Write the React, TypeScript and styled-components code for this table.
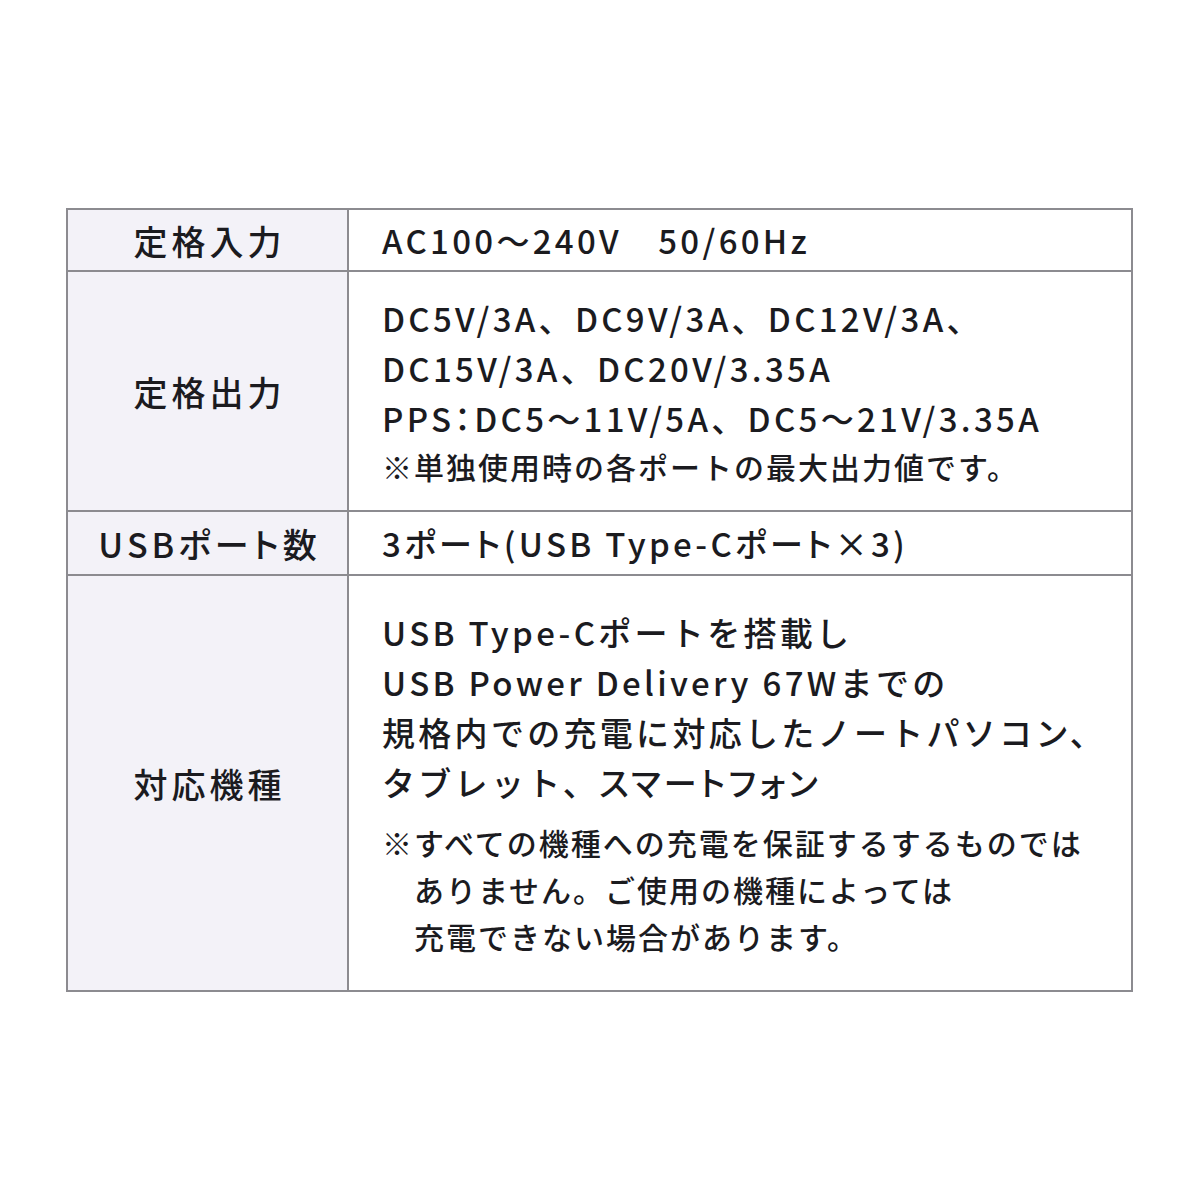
import React from "react";
import styled, { createGlobalStyle } from "styled-components";

const Global = createGlobalStyle`
  html, body { margin: 0; padding: 0; background: #ffffff; }
  body { font-family: "Noto Sans CJK JP", "Noto Sans", sans-serif; color: #1b1b1f; }
`;

const Page = styled.div`
  width: 1200px;
  height: 1200px;
  padding: 208px 0 0 66px;
  box-sizing: border-box;
`;

const Table = styled.div`
  width: 1067px;
  border: 2px solid #8c8b90;
  box-sizing: border-box;
  display: flex;
  flex-direction: column;
`;

const Row = styled.div<{ $h: number; $last?: boolean }>`
  display: grid;
  grid-template-columns: 281px 1fr;
  height: ${(p) => p.$h}px;
  box-sizing: border-box;
  border-bottom: ${(p) => (p.$last ? "none" : "2px solid #8c8b90")};
`;

const Label = styled.div`
  background: #f3f2f8;
  border-right: 2px solid #8c8b90;
  display: flex;
  align-items: center;
  justify-content: center;
  font-size: 34px;
  font-weight: 500;
  letter-spacing: 4px;
  padding-left: 4px;
  font-feature-settings: "palt";
`;

const Value = styled.div`
  display: flex;
  flex-direction: column;
  justify-content: center;
  padding-left: 33px;
  font-size: 33px;
  font-weight: 500;
  letter-spacing: 3.3px;
`;

const Line = styled.div<{ $palt?: boolean }>`
  line-height: 50px;
  white-space: nowrap;
  font-feature-settings: ${(p) => (p.$palt ? '"palt"' : "normal")};
`;

const Full = styled.span`
  font-feature-settings: normal;
`;

const Tight = styled.span`
  font-feature-settings: "palt";
`;

const Note = styled.div<{ $gap?: number }>`
  font-size: 30px;
  font-weight: 500;
  line-height: 47px;
  letter-spacing: 2px;
  margin-top: ${(p) => p.$gap ?? 0}px;
  padding-left: 32px;
  text-indent: -32px;
  white-space: nowrap;
`;

export default function App() {
  return (
    <Page>
      <Global />
      <Table>
        <Row $h={62}>
          <Label>定格入力</Label>
          <Value>
            <Line>AC100〜240V　50/60Hz</Line>
          </Value>
        </Row>
        <Row $h={240}>
          <Label>定格出力</Label>
          <Value>
            <Line>DC5V/3A、DC9V/3A、DC12V/3A、</Line>
            <Line>DC15V/3A、DC20V/3.35A</Line>
            <Line $palt>
              PPS：DC5〜11V/5A<Full>、</Full>DC5〜21V/3.35A
            </Line>
            <Note>※単独使用時の各ポートの最大出力値です。</Note>
          </Value>
        </Row>
        <Row $h={64}>
          <Label>USBポート数</Label>
          <Value>
            <Line $palt>3ポート(USB Type-Cポート×3)</Line>
          </Value>
        </Row>
        <Row $h={414} $last>
          <Label>対応機種</Label>
          <Value>
            <Line>USB Type-Cポートを搭載し</Line>
            <Line>USB Power Delivery 67Wまでの</Line>
            <Line>規格内での充電に対応したノートパソコン、</Line>
            <Line>
              タブレット、<Tight>スマートフォン</Tight>
            </Line>
            <Note $gap={12}>
              ※すべての機種への充電を保証するするものでは
              <br />
              ありません。ご使用の機種によっては
              <br />
              充電できない場合があります。
            </Note>
          </Value>
        </Row>
      </Table>
    </Page>
  );
}
